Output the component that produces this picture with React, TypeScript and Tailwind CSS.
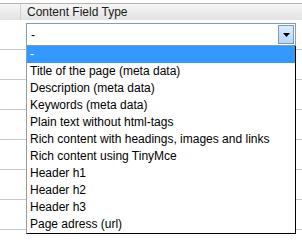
import React from "react";

const items = [
  "-",
  "Title of the page (meta data)",
  "Description (meta data)",
  "Keywords (meta data)",
  "Plain text without html-tags",
  "Rich content with headings, images and links",
  "Rich content using TinyMce",
  "Header h1",
  "Header h2",
  "Header h3",
  "Page adress (url)",
];

export default function App() {
  return (
    <div
      className="relative w-[302px] h-[244px] bg-white overflow-hidden text-[12px] text-black"
      style={{ fontFamily: '"Liberation Sans", Arial, sans-serif' }}
    >
      <div className="h-[3px]" />
      <div className="flex h-[17px] border-t border-[#b4b4b4] bg-gradient-to-b from-[#f6f6f6] to-[#e3e3e3]">
        <div className="w-[21px] border-r border-[#d2d2d2]" />
        <div className="pl-[6px] leading-[16px] text-[#1a1a1a]">Content Field Type</div>
      </div>
      <div className="flex h-[30px] border-b border-[#c8c8c8]">
        <div className="w-[21px]" />
        <div className="pl-[5px] pt-[3px]">
          <div className="flex h-[23px] w-[270px] items-center border border-[#7f9db9] bg-white pl-[4px] pr-[1px]">
            <span className="flex-1 leading-[14px]">-</span>
            <div className="flex h-[19px] w-[16px] items-center justify-center border border-[#7d97b8] bg-gradient-to-b from-[#dcecff] to-[#b6d6fb]">
              <svg width="7" height="4" viewBox="0 0 7 4">
                <path d="M0 0h7L3.5 4z" fill="#000" />
              </svg>
            </div>
          </div>
        </div>
      </div>
      {[0, 1, 2, 3, 4, 5].map((i) => (
        <div key={i} className="h-[30px] border-b border-[#c8c8c8]" />
      ))}
      <div className="absolute left-[26px] top-[46px] w-[270px] border-l border-l-[#9a9a9a] border-r border-r-black border-b border-b-black bg-white">
        {items.map((t, i) => (
          <div
            key={i}
            className={
              "h-[17px] pl-[3px] leading-[17px] whitespace-nowrap " +
              (i === 0 ? "bg-[#3399ff] text-white" : "text-black")
            }
          >
            {t}
          </div>
        ))}
      </div>
    </div>
  );
}
